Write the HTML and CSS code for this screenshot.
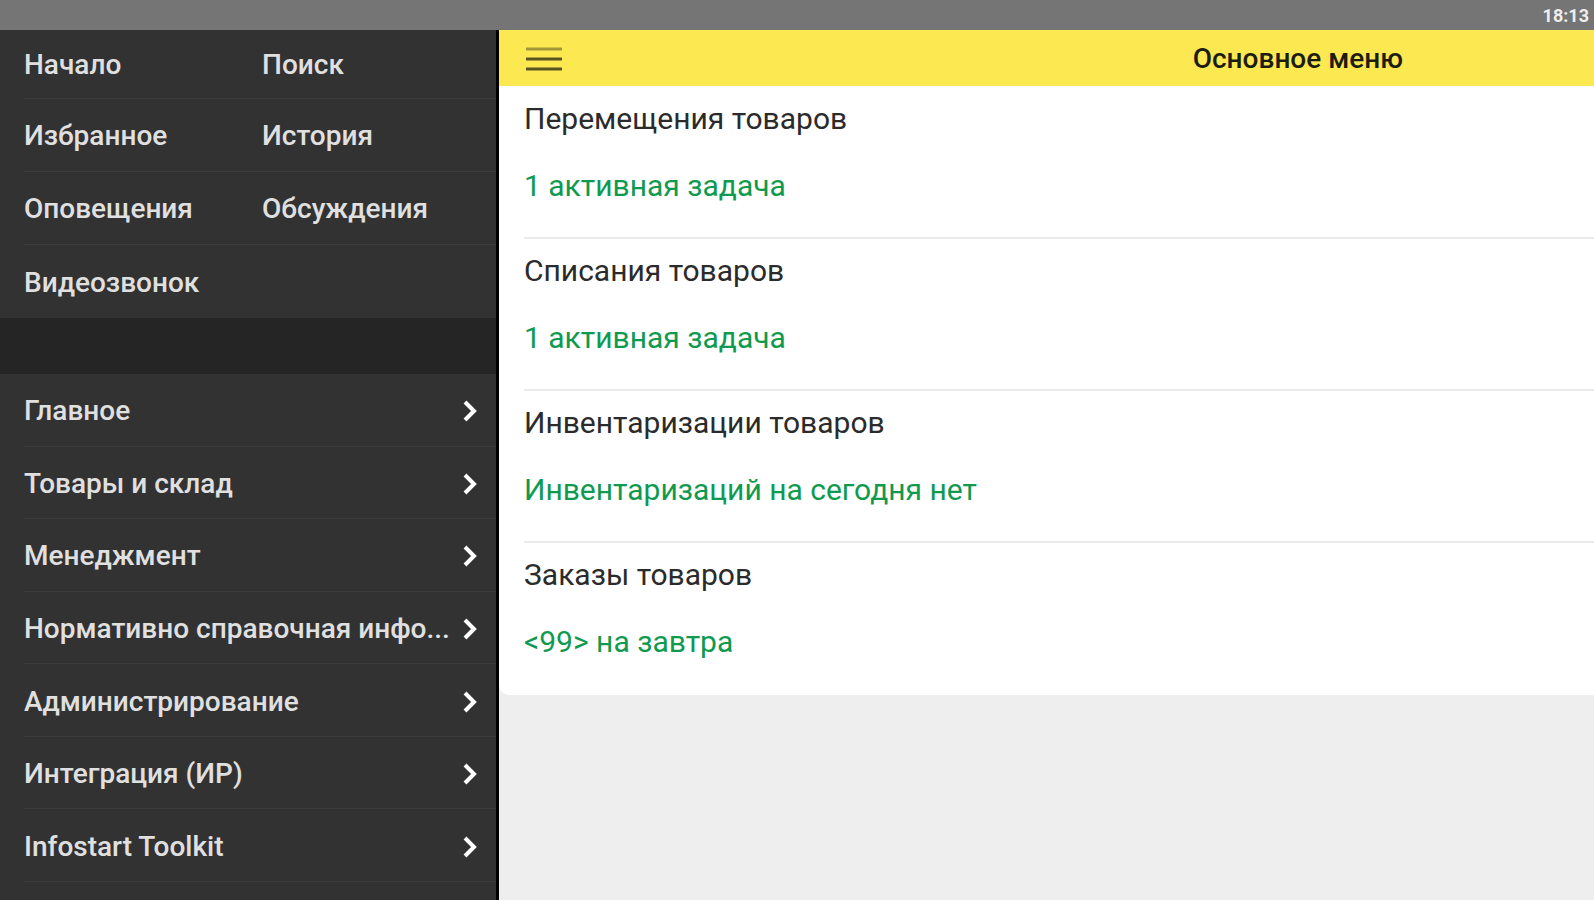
FILE: index.html
```html
<!DOCTYPE html>
<html lang="ru">
<head>
    <meta charset="UTF-8">
    <meta name="viewport" content="width=device-width, initial-scale=1.0">
    <title>Основное меню</title>
    <link rel="stylesheet" href="styles.css">
</head>
<body>
    <div class="status-bar">
        <span class="clock">18:13</span>
    </div>

    <div class="layout">
        <!-- Боковая панель -->
        <nav class="sidebar">
            <div class="quick-links">
                <div class="quick-row">
                    <a href="#">Начало</a>
                    <a href="#">Поиск</a>
                </div>
                <div class="quick-row">
                    <a href="#">Избранное</a>
                    <a href="#">История</a>
                </div>
                <div class="quick-row">
                    <a href="#">Оповещения</a>
                    <a href="#">Обсуждения</a>
                </div>
                <div class="quick-row">
                    <a href="#">Видеозвонок</a>
                </div>
            </div>

            <div class="sections">
                <a class="section-link" href="#">
                    <span>Главное</span>
                    <svg class="chevron" viewBox="0 0 16 22"><path d="M3 2l9 9-9 9"/></svg>
                </a>
                <a class="section-link" href="#">
                    <span>Товары и склад</span>
                    <svg class="chevron" viewBox="0 0 16 22"><path d="M3 2l9 9-9 9"/></svg>
                </a>
                <a class="section-link" href="#">
                    <span>Менеджмент</span>
                    <svg class="chevron" viewBox="0 0 16 22"><path d="M3 2l9 9-9 9"/></svg>
                </a>
                <a class="section-link" href="#">
                    <span>Нормативно справочная инфо...</span>
                    <svg class="chevron" viewBox="0 0 16 22"><path d="M3 2l9 9-9 9"/></svg>
                </a>
                <a class="section-link" href="#">
                    <span>Администрирование</span>
                    <svg class="chevron" viewBox="0 0 16 22"><path d="M3 2l9 9-9 9"/></svg>
                </a>
                <a class="section-link" href="#">
                    <span>Интеграция (ИР)</span>
                    <svg class="chevron" viewBox="0 0 16 22"><path d="M3 2l9 9-9 9"/></svg>
                </a>
                <a class="section-link" href="#">
                    <span>Infostart Toolkit</span>
                    <svg class="chevron" viewBox="0 0 16 22"><path d="M3 2l9 9-9 9"/></svg>
                </a>
            </div>
        </nav>

        <!-- Основное меню -->
        <main class="content">
            <header class="toolbar">
                <button class="menu-button" type="button" aria-label="Меню">
                    <svg viewBox="0 0 36 24"><path class="line-light" d="M0 2h36"/><path d="M0 12h36M0 22h36"/></svg>
                </button>
                <h1>Основное меню</h1>
            </header>

            <div class="task-list">
                <section class="task">
                    <h2>Перемещения товаров</h2>
                    <a href="#">1 активная задача</a>
                </section>
                <section class="task">
                    <h2>Списания товаров</h2>
                    <a href="#">1 активная задача</a>
                </section>
                <section class="task">
                    <h2>Инвентаризации товаров</h2>
                    <a href="#">Инвентаризаций на сегодня нет</a>
                </section>
                <section class="task">
                    <h2>Заказы товаров</h2>
                    <a href="#">&lt;99&gt; на завтра</a>
                </section>
            </div>
        </main>
    </div>
</body>
</html>
```

FILE: styles.css
```css
* {
    box-sizing: border-box;
}
body {
    font-family: Roboto, "Noto Sans", sans-serif;
    margin: 0;
    min-height: 100vh;
    display: flex;
    flex-direction: column;
    background-color: #eeeeee;
}
a {
    text-decoration: none;
}
.status-bar {
    height: 30px;
    padding: 2px 5px 0;
    display: flex;
    align-items: center;
    justify-content: flex-end;
    background-color: #757575;
}
.clock {
    font-size: 18px;
    font-weight: bold;
    line-height: 20px;
    color: #eeeeee;
}
.layout {
    flex: 1;
    display: flex;
}

/* Боковая панель */
.sidebar {
    width: 499px;
    flex-shrink: 0;
    display: flex;
    flex-direction: column;
    gap: 56px;
    border-right: 3px solid #000000;
    background-color: #252525;
}
.sidebar a {
    font-size: 28px;
    font-weight: 500;
    line-height: 32px;
    color: #e0e0e0;
}
.quick-links {
    padding-left: 24px;
    background-color: #323232;
}
.quick-row {
    height: 73px;
    padding-top: 2px;
    display: grid;
    grid-template-columns: 238px 1fr;
    align-items: center;
    border-bottom: 1px solid #3c3c3c;
}
.quick-row:first-child {
    height: 69px;
}
.quick-row:last-child {
    border-bottom: none;
}
.sections {
    flex: 1;
    padding: 0 0 18px 24px;
    display: grid;
    grid-auto-rows: 1fr;
    background-color: #323232;
}
.section-link {
    padding: 3px 18px 0 0;
    display: flex;
    align-items: center;
    justify-content: space-between;
    border-bottom: 1px solid #3c3c3c;
}
.section-link span {
    white-space: nowrap;
}
.chevron {
    width: 16px;
    height: 22px;
    fill: none;
    stroke: #ffffff;
    stroke-width: 4;
}

/* Основное меню */
.content {
    flex: 1;
    min-width: 0;
}
.toolbar {
    height: 56px;
    padding: 2px 191px 0 27px;
    display: flex;
    align-items: center;
    justify-content: space-between;
    background-color: #fce850;
}
.toolbar h1 {
    margin: 0;
    font-size: 28px;
    font-weight: 500;
    line-height: 32px;
    color: #1c1c10;
}
.menu-button {
    padding: 0;
    border: none;
    background: none;
    cursor: pointer;
}
.menu-button svg {
    display: block;
    width: 36px;
    height: 24px;
    fill: none;
    stroke: #5c5420;
    stroke-width: 3;
}
.menu-button .line-light {
    stroke: #a3953a;
}
.task-list {
    padding: 1px 0 0 25px;
    background-color: #ffffff;
    border-bottom-left-radius: 10px;
}
.task {
    height: 152px;
    padding-top: 14px;
    display: flex;
    flex-direction: column;
    align-items: flex-start;
    gap: 32px;
    border-bottom: 2px solid #ebebeb;
}
.task:last-child {
    border-bottom: none;
}
.task h2 {
    margin: 0;
    font-size: 30px;
    font-weight: 400;
    line-height: 35px;
    color: #2b2b2b;
}
.task a {
    font-size: 30px;
    line-height: 35px;
    color: #109a50;
}
```
